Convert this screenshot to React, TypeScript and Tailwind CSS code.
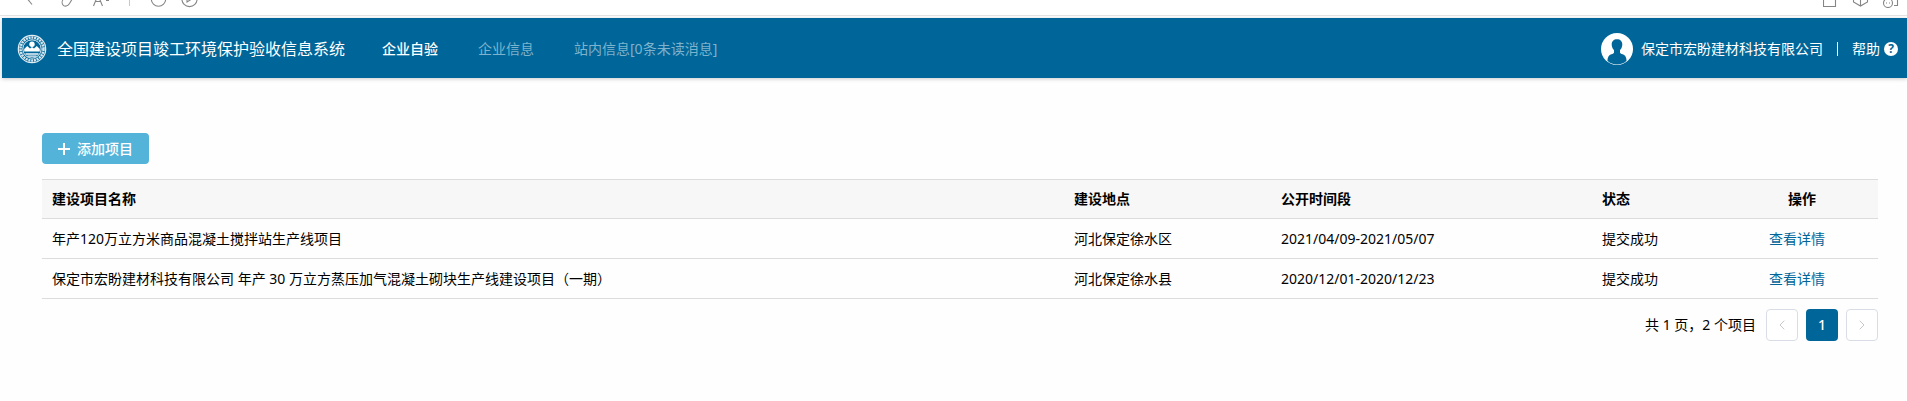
import React from 'react';
import { ChevronLeft, ChevronRight } from 'lucide-react';

const projects = [
  {
    name: '年产120万立方米商品混凝土搅拌站生产线项目',
    place: '河北保定徐水区',
    period: '2021/04/09-2021/05/07',
    status: '提交成功',
  },
  {
    name: '保定市宏盼建材科技有限公司 年产 30 万立方蒸压加气混凝土砌块生产线建设项目（一期）',
    place: '河北保定徐水县',
    period: '2020/12/01-2020/12/23',
    status: '提交成功',
  },
];

function BrowserStrip() {
  return (
    <div className="flex h-4 items-start justify-between border-b border-[#e4e4e4] bg-white">
      <svg width="220" height="8" viewBox="0 0 220 8" fill="none" stroke="#858585" strokeWidth="1.1" aria-hidden="true">
        <path d="M25.500-3.500 32 4.500" />
        <path d="M64.500-2C62 0 61.500 3 63 5S68 6 69.500 3.500L72.500-1.500" />
        <path d="M93.500 6 98-5 102.500 6M95.500 1.500h5M106 .5h3" />
        <path d="M129.500 0v6" stroke="#c9c9c9" />
        <circle cx="158.500" cy="-1" r="7.200" />
        <circle cx="189.500" cy="-1" r="7.600" />
        <path d="M187-4v6l5.500-3.500" />
      </svg>
      <svg width="84" height="8" viewBox="0 0 84 8" fill="none" stroke="#858585" strokeWidth="1.100" aria-hidden="true">
        <path d="M.500-5v11.500h12V-5" />
        <path d="M30.500-4v6l7 4 7-4v-6M37.500-2v8" />
        <circle cx="65" cy="3" r="4.500" />
        <path d="M63 3h1M66 3h1M71 5.500h3.500V0" />
      </svg>
    </div>
  );
}

function Emblem() {
  return (
    <svg className="size-[30px] shrink-0" viewBox="0 0 30 30" fill="none" aria-hidden="true">
      <circle cx="15" cy="15" r="13.700" stroke="#e3eef4" strokeWidth="1.200" />
      <circle cx="15" cy="15" r="11.500" stroke="#d3e4ed" strokeWidth="2.600" strokeDasharray="2 0.800" />
      <circle cx="15" cy="15" r="9.200" stroke="#e3eef4" strokeWidth="1" />
      <circle cx="15" cy="10.200" r="2.700" fill="#fff" />
      <path d="M7.200 17.500V15l3-3 2.800 2.500 2-1.500 2 1.500 2.800-2.500 3 3v2.500z" fill="#fff" />
      <path d="M8.500 20h13M10.500 22.200h9" stroke="#f0f6f9" strokeWidth="1.300" />
    </svg>
  );
}

function Avatar() {
  return (
    <svg className="size-8 shrink-0" viewBox="0 0 32 32" aria-hidden="true">
      <circle cx="16" cy="16" r="16" fill="#fff" />
      <path
        d="M16 6.300c-3.300 0-5.300 2-5.300 5.200 0 1.900.8 4.300 2.300 5.600v2.300c0 .8-1.200 1.300-2.700 1.900-2.200.8-3.700 2.500-3.900 6.500C9 30.400 12.400 31.500 16 31.500s7-1.100 9.600-3.700c-.2-4-1.700-5.700-3.900-6.500-1.500-.6-2.700-1.100-2.700-1.900v-2.300c1.500-1.300 2.300-3.700 2.300-5.600 0-3.200-2-5.200-5.300-5.200z"
        fill="#006699"
      />
    </svg>
  );
}

function Header() {
  return (
    <header className="mt-0.5 ml-0.5 flex h-[60px] items-center bg-[#006699] pt-0.5 pr-[9px] pl-[15px] text-white shadow-[0_1px_4px_rgba(0,0,0,0.2)]">
      <Emblem />
      <h1 className="ml-2.5 text-base whitespace-nowrap">全国建设项目竣工环境保护验收信息系统</h1>
      <nav className="ml-[37px] flex gap-10 whitespace-nowrap">
        <a href="#check" className="font-medium">企业自验</a>
        <a href="#company" className="text-[#7fb2cc]">企业信息</a>
        <a href="#messages" className="text-[#7fb2cc]">站内信息[0条未读消息]</a>
      </nav>
      <div className="ml-auto flex items-center whitespace-nowrap">
        <Avatar />
        <span className="ml-2">保定市宏盼建材科技有限公司</span>
        <span className="mx-3.5 h-3.5 w-px bg-white" />
        <a href="#help" className="flex items-center gap-1">
          帮助
          <span className="flex size-3.5 items-center justify-center rounded-full bg-white text-xs font-bold text-[#006699]">?</span>
        </a>
      </div>
    </header>
  );
}

function ProjectTable() {
  return (
    <table className="mt-[15px] w-full table-fixed border-collapse border-y border-[#dcdcdc] text-left">
      <colgroup>
        <col />
        <col className="w-[207px]" />
        <col className="w-[321px]" />
        <col className="w-[134px]" />
        <col className="w-[152px]" />
      </colgroup>
      <thead>
        <tr className="h-[39px] border-b border-[#dcdcdc] bg-[#f7f7f7]">
          <th className="px-2.5 font-bold">建设项目名称</th>
          <th className="px-2.5 font-bold">建设地点</th>
          <th className="px-2.5 font-bold">公开时间段</th>
          <th className="px-2.5 font-bold">状态</th>
          <th className="px-2.5 text-center font-bold">操作</th>
        </tr>
      </thead>
      <tbody>
        {projects.map((p) => (
          <tr key={p.name} className="h-10 border-b border-[#dcdcdc]">
            <td className="px-2.5">{p.name}</td>
            <td className="px-2.5">{p.place}</td>
            <td className="px-2.5">{p.period}</td>
            <td className="px-2.5">{p.status}</td>
            <td className="pr-5 pl-2.5 text-center">
              <a href="#detail" className="text-[#006699]">查看详情</a>
            </td>
          </tr>
        ))}
      </tbody>
    </table>
  );
}

function Pagination() {
  return (
    <div className="mt-2.5 flex items-center justify-end gap-2">
      <span className="mr-0.5">共 1 页，2 个项目</span>
      <button aria-label="上一页" className="flex size-8 items-center justify-center rounded border border-[#d9dde6] bg-white text-[#c8c8c8]">
        <ChevronLeft size={16} strokeWidth={1.5} />
      </button>
      <button className="size-8 rounded bg-[#006699] font-medium text-white">1</button>
      <button aria-label="下一页" className="flex size-8 items-center justify-center rounded border border-[#d9dde6] bg-white text-[#c8c8c8]">
        <ChevronRight size={16} strokeWidth={1.5} />
      </button>
    </div>
  );
}

export default function App() {
  return (
    <div className="min-h-screen bg-[#fefefe] font-['Noto_Sans','Noto_Sans_CJK_SC',sans-serif] text-sm text-black">
      <BrowserStrip />
      <Header />
      <main className="pt-[55px] pr-[29px] pb-10 pl-[42px]">
        <button className="flex h-[31px] items-center gap-[7px] rounded bg-[#53b3d9] pr-4 pl-4 font-medium text-white">
          <svg className="size-3" viewBox="0 0 12 12" stroke="currentColor" strokeWidth="2" aria-hidden="true">
            <path d="M6 0v12M0 6h12" />
          </svg>
          添加项目
        </button>
        <ProjectTable />
        <Pagination />
      </main>
    </div>
  );
}
